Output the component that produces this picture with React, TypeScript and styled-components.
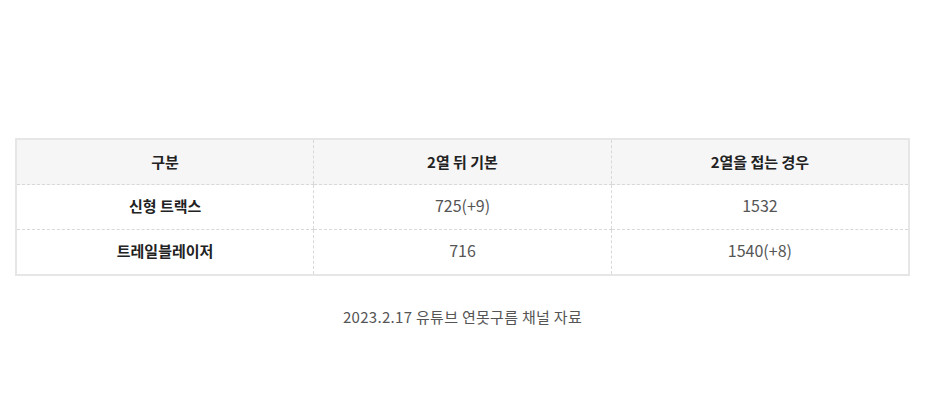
import * as React from 'react';
import styled, {createGlobalStyle} from 'styled-components';

const GlobalStyle = createGlobalStyle`
  html, body {
    margin: 0;
    padding: 0;
    background: #fff;
  }
  body {
    font-family: "Noto Sans CJK KR", "Noto Sans", sans-serif;
    color: #333;
  }
`;

const Page = styled.div`
  width: 936px;
  height: 405px;
  box-sizing: border-box;
  padding: 138px 26px 0 15px;
`;

const Table = styled.table`
  width: 895px;
  border-collapse: collapse;
  table-layout: fixed;
  border: 2px solid #e6e6e6;
`;

const HeadCell = styled.th`
  height: 42px;
  padding: 0 0 2px;
  background: #f6f6f6;
  font-size: 15px;
  font-weight: 700;
  color: #222;
  text-align: center;
  border-left: 1px dashed #d8d8d8;
  border-bottom: 1px dashed #d8d8d8;

  &:first-child {
    border-left: none;
  }
`;

const Cell = styled.td<{$label?: boolean}>`
  height: 40px;
  padding: 0 0 4px;
  text-align: center;
  font-size: ${props => (props.$label ? '15px' : '16px')};
  font-weight: ${props => (props.$label ? 700 : 400)};
  color: ${props => (props.$label ? '#222' : '#555')};
  border-left: 1px dashed #d8d8d8;
  border-bottom: 1px dashed #d8d8d8;

  &:first-child {
    border-left: none;
  }
`;

const Caption = styled.p`
  margin: 31px 0 0;
  width: 895px;
  text-align: center;
  font-size: 15px;
  letter-spacing: 0.3px;
  line-height: 20px;
  color: #555;
`;

const rows = [
  {label: '신형 트랙스', base: '725(+9)', folded: '1532'},
  {label: '트레일블레이저', base: '716', folded: '1540(+8)'},
];

export default function App() {
  return (
    <Page>
      <GlobalStyle />
      <Table>
        <thead>
          <tr>
            <HeadCell>구분</HeadCell>
            <HeadCell>2열 뒤 기본</HeadCell>
            <HeadCell>2열을 접는 경우</HeadCell>
          </tr>
        </thead>
        <tbody>
          {rows.map(row => (
            <tr key={row.label}>
              <Cell $label>{row.label}</Cell>
              <Cell>{row.base}</Cell>
              <Cell>{row.folded}</Cell>
            </tr>
          ))}
        </tbody>
      </Table>
      <Caption>2023.2.17 유튜브 연못구름 채널 자료</Caption>
    </Page>
  );
}
